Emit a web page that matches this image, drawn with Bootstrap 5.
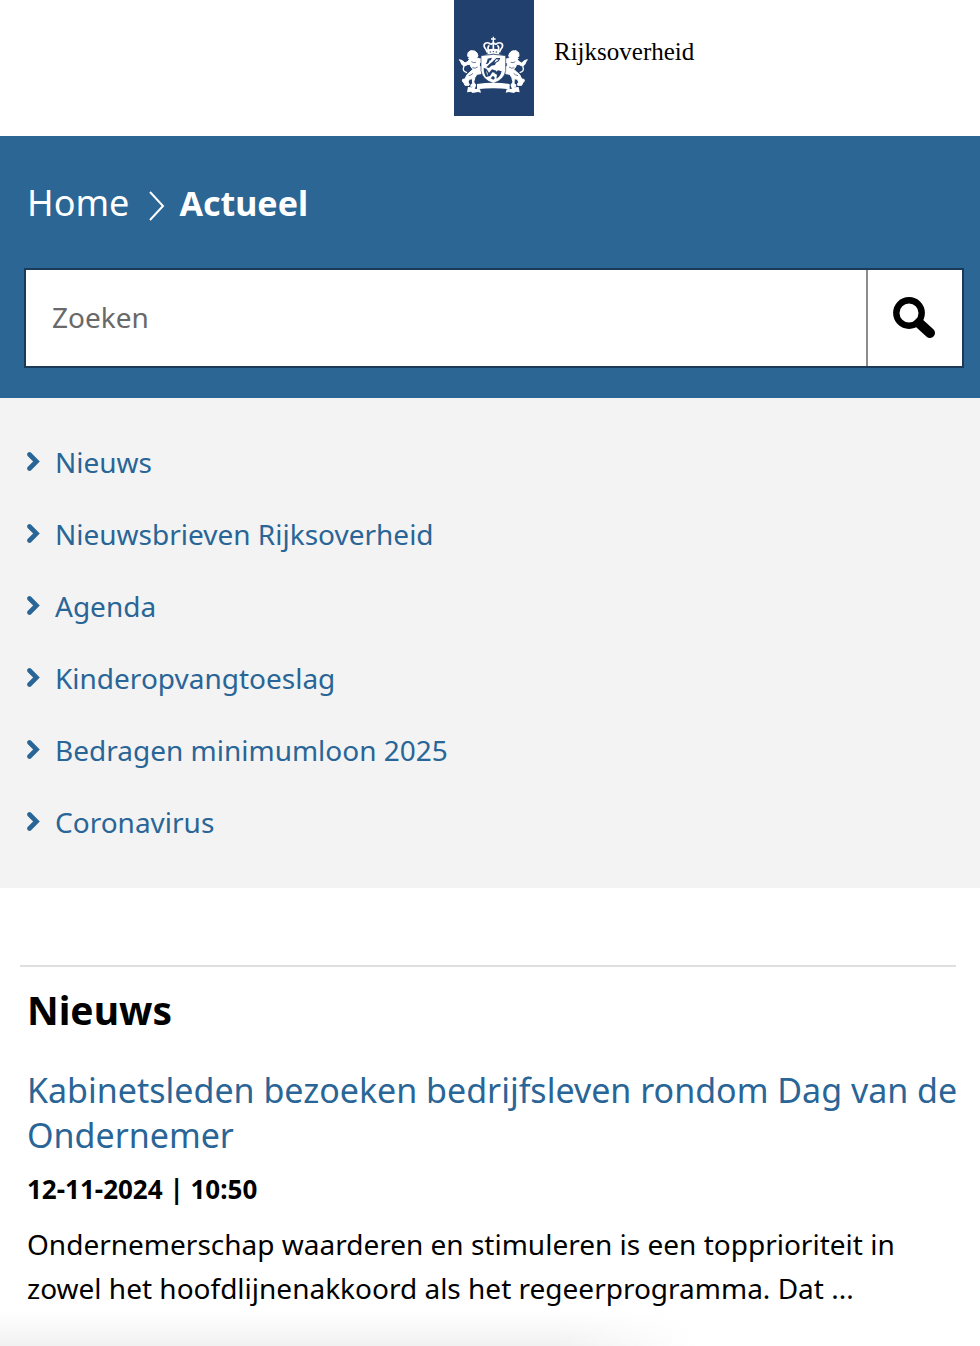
<!DOCTYPE html>
<html lang="nl">
<head>
<meta charset="utf-8">
<meta name="viewport" content="width=device-width, initial-scale=1">
<title>Actueel | Rijksoverheid</title>
<link rel="stylesheet" href="https://cdn.jsdelivr.net/npm/bootstrap@5.3.0/dist/css/bootstrap.min.css">
<style>
  :root { --ro-blue: #2b6695; --ro-link: #296596; --ro-navy: #22406d; }
  body { font-family: "Noto Sans", sans-serif; color: #000; background: #fff; }
  a { color: var(--ro-link); text-decoration: none; }
  a:hover { text-decoration: underline; }
  .gutter { padding-left: 27px; padding-right: 16px; }
  .site-head { display: grid; grid-template-columns: 1fr 80px 1fr; padding: 0 16px 20px 24px; }
  .ribbon { grid-column: 2; background: var(--ro-navy); height: 116px; padding-top: 30px; }
  .wordmark { font-family: "Liberation Serif", serif; font-size: 25px; line-height: 32px; padding: 36px 0 0 20px; }
  .bluebar { background: var(--ro-blue); padding: 40px 16px 30px 24px; }
  .crumbs { font-size: 36px; line-height: 54px; padding-left: 3px; margin-bottom: 38px; color: #fff; }
  .crumbs a { color: #fff; }
  .crumbs strong { font-size: 34px; }
  .crumbs svg { margin: 5px 14px 0 20px; }
  .search-box { border: 2px solid #1b3a58; background: #fff; height: 100px; }
  .search-box .form-control { border: 0; border-radius: 0; font-size: 28px; padding: 0 26px 2px; color: #000; box-shadow: none; }
  .search-box .form-control::placeholder { color: #696969; }
  .search-box .btn { width: 96px; border: 0; border-left: 2px solid #8c8c8c; border-radius: 0; background: #fff; padding: 0 2px 0 0; }
  .topics { background: #f3f3f3; padding-top: 28px; padding-bottom: 30px; font-size: 28px; line-height: 72px; }
  .topics svg { margin: 0 15px 2px 0; }
  .news { padding-top: 77px; }
  .news hr { margin: 0 24px 0 20px; border-top: 2px solid #dfdfdf; opacity: 1; }
  .news h2 { font-size: 39px; line-height: 52px; font-weight: 700; margin: 17px 0 32px; }
  .news h3 { font-size: 34px; line-height: 45px; font-weight: 400; margin: 0 0 13px; }
  .stamp { font-size: 26px; line-height: 36px; font-weight: 700; margin: 0 0 15px; }
  .intro { font-size: 28px; line-height: 44px; margin: 0; }
  .fade-foot { height: 37px; background: linear-gradient(to bottom, transparent, #f1f1f1); -webkit-mask-image: linear-gradient(to right, #000 57%, transparent 71%); mask-image: linear-gradient(to right, #000 57%, transparent 71%); }
</style>
</head>
<body>
<header class="site-head">
  <div class="ribbon">
    <svg class="d-block" width="80" height="70" viewBox="2 0 240 210" fill="#fff" aria-hidden="true">
      <g id="crown">
        <path d="M118 20h4v5h5v4h-5v7h-4v-7h-5v-4h5z"/>
        <path d="M102 67q-3-8-9-16-3-9 5-12 9-3 14 5M138 67q3-8 9-16 3-9-5-12-9-3-14 5M106 62q-5-10 2-16M134 62q5-10-2-16M120 34v28M112 44q8-9 16 0" fill="none" stroke="#fff" stroke-width="5"/>
        <path d="M101 59q19-5 38 0l-2 14q-17-3-34 0z"/>
        <path d="M108 66l3-2 3 2-3 2zM117 65l3-2 3 2-3 2zM126 66l3-2 3 2-3 2z" fill="#22406d"/>
      </g>
      <g id="lion">
        <path stroke="#fff" stroke-width="3" stroke-linejoin="round" d="M44 68l8-6 12 1 7 6 3 9-4 5 10 4 15-6 8 3-9 9-15 5-1 8 4 4 3 12-2 9-12 2-6 9-4 14 6 9-1 4H52l2-6 4-2-1-15-9 2-4 8 4 7-1 3H35l-3-7-5-6 1-5 7-1 6-13 9-8 9-8-6-7-3-8-8 1-8 4-8-4-4-9-4-6 9 3 8 7 7-4 6-6-3-4 4-3-6-3z"/>
        <path d="M54 95q7 5 14 2M57 113q9 4 16-2M46 137q8-1 13-7" fill="none" stroke="#22406d" stroke-width="2"/>
        <path d="M41 128q-15-4-10-16 3-6-9-20" fill="none" stroke="#fff" stroke-width="4"/>
      </g>
      <use href="#lion" transform="matrix(-1 0 0 1 240 0)"/>
      <g id="shield">
        <path d="M83 77q37-8 74 0v45q-4 27-37 38-33-11-37-38z" stroke="#22406d" stroke-width="2"/>
        <path d="M103 86l13-3-4 9-9 9-6 1 4-7zM117 95l12-11h12l-4 9-9 5-3 7-11 2-7 7-8-2 9-9zM91 113l9 4 7 11 9-10 13 4-2 7-10-2-7 11-11 3q-8-8-8-28zM134 121l11 3q-4 17-16 22l2-12-8-4zM112 145l7-8 6 7-5 5z" fill="#22406d"/>
        <path d="M109 91l9 2-12 10zM128 88l9 1-14 9zM98 121l5 9-1 8z"/>
      </g>
      <g id="scroll">
        <path d="M71 162q49-7 98 0v16q-49-6-98 0z"/>
        <path d="M44 171l12 1 6-6 5 4-3 6 16 2 3 10-9-2-16 3-5-4-12 2zM196 171l-12 1-6-6-5 4 3 6-16 2-3 10 9-2 16 3 5-4 12 2z"/>
      </g>
    </svg>
  </div>
  <div class="wordmark">Rijksoverheid</div>
</header>

<div class="bluebar">
  <nav class="crumbs d-flex align-items-center" aria-label="Kruimelpad">
    <a href="#">Home</a>
    <svg width="16" height="30" viewBox="0 0 16 30" fill="none" stroke="#fff" stroke-width="2" aria-hidden="true"><path d="M1 1l13 14L1 29"/></svg>
    <strong aria-current="page">Actueel</strong>
  </nav>
  <form class="search-box d-flex" role="search">
    <input class="form-control" type="text" placeholder="Zoeken" aria-label="Zoeken">
    <button class="btn flex-shrink-0" type="button" aria-label="Zoek">
      <svg width="44" height="42" viewBox="0 0 44 42" fill="none" stroke="#000" aria-hidden="true"><circle cx="17" cy="16" r="12.7" stroke-width="6.4"/><path d="M27 26l11 10" stroke-width="10" stroke-linecap="round"/></svg>
    </button>
  </form>
</div>

<nav class="topics gutter" aria-label="Onderwerpen">
  <svg class="d-none"><symbol id="chev" viewBox="0 0 13 20"><path d="M2.5 3.5l7 7-7 7" fill="none" stroke="#296596" stroke-width="4.6" stroke-linecap="round"/></symbol></svg>
  <ul class="list-unstyled mb-0">
    <li class="d-flex align-items-center"><svg width="13" height="20" aria-hidden="true"><use href="#chev"/></svg><a href="#">Nieuws</a></li>
    <li class="d-flex align-items-center"><svg width="13" height="20" aria-hidden="true"><use href="#chev"/></svg><a href="#">Nieuwsbrieven Rijksoverheid</a></li>
    <li class="d-flex align-items-center"><svg width="13" height="20" aria-hidden="true"><use href="#chev"/></svg><a href="#">Agenda</a></li>
    <li class="d-flex align-items-center"><svg width="13" height="20" aria-hidden="true"><use href="#chev"/></svg><a href="#">Kinderopvangtoeslag</a></li>
    <li class="d-flex align-items-center"><svg width="13" height="20" aria-hidden="true"><use href="#chev"/></svg><a href="#">Bedragen minimumloon 2025</a></li>
    <li class="d-flex align-items-center"><svg width="13" height="20" aria-hidden="true"><use href="#chev"/></svg><a href="#">Coronavirus</a></li>
  </ul>
</nav>

<main class="news">
  <hr>
  <article class="gutter">
    <h2>Nieuws</h2>
    <h3><a href="#">Kabinetsleden bezoeken bedrijfsleven rondom Dag van de Ondernemer</a></h3>
    <p class="stamp">12-11-2024 | 10:50</p>
    <p class="intro">Ondernemerschap waarderen en stimuleren is een topprioriteit in zowel het hoofdlijnenakkoord als het regeerprogramma. Dat ...</p>
  </article>
  <div class="fade-foot"></div>
</main>
<script src="https://cdn.jsdelivr.net/npm/bootstrap@5.3.0/dist/js/bootstrap.bundle.min.js"></script>
</body>
</html>
